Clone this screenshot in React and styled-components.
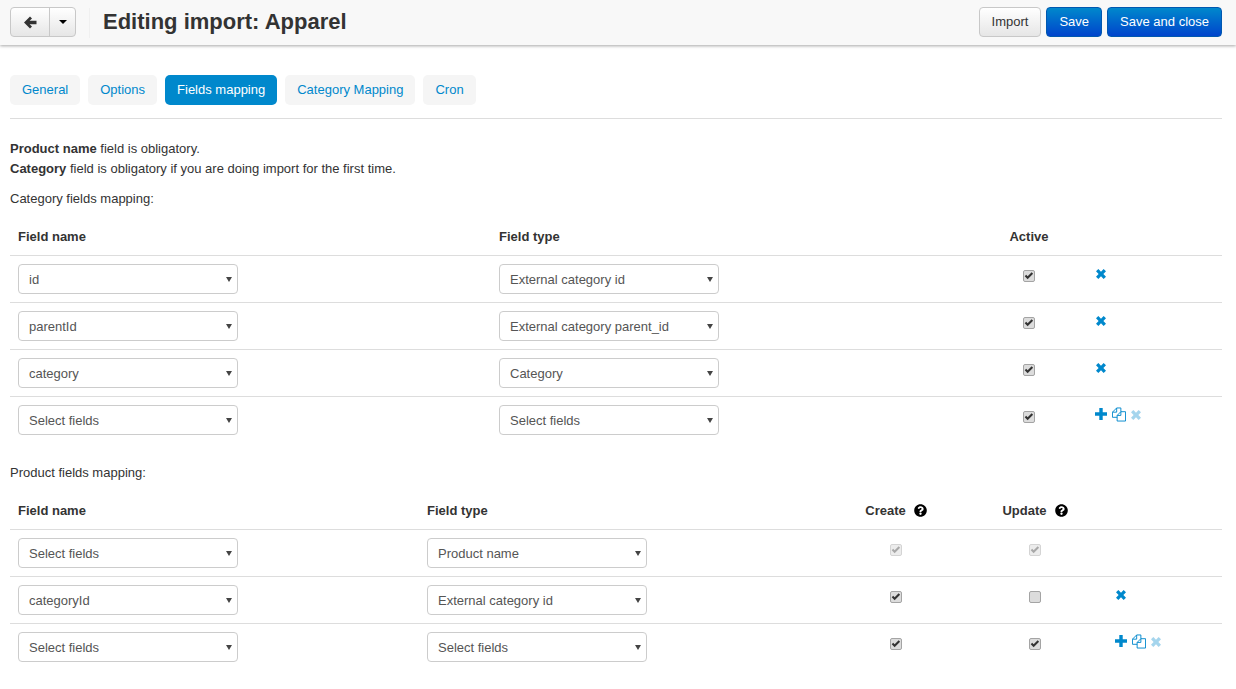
import React from 'react';
import styled, { createGlobalStyle } from 'styled-components';
import { FaQuestionCircle } from 'react-icons/fa';

const GlobalStyle = createGlobalStyle`
  html, body {
    margin: 0;
    padding: 0;
    background: #fff;
  }
  body {
    font-family: "Liberation Sans", Arial, sans-serif;
    font-size: 13px;
    line-height: 20px;
    color: #333;
  }
`;

const Header = styled.header`
  display: flex;
  align-items: center;
  height: 45px;
  padding: 0 14px 0 10px;
  background: #f8f8f8;
  box-shadow: 0 1px 3px rgba(0, 0, 0, 0.35);
`;
const BackGroup = styled.div`
  display: flex;
  height: 30px;
  margin-top: -1px;
  border: 1px solid #c8c8c8;
  border-radius: 4px;
  box-sizing: border-box;
  background: linear-gradient(#fff, #e6e6e6);
`;
const BackButton = styled.div`
  display: flex;
  align-items: center;
  justify-content: center;
  width: ${(props) => props.width}px;
  color: #333;
  & + & {
    border-left: 1px solid #c8c8c8;
  }
`;
const Caret = styled.span`
  width: 0;
  height: 0;
  border-left: 4px solid transparent;
  border-right: 4px solid transparent;
  border-top: 4px solid #000;
`;
const Divider = styled.div`
  width: 1px;
  height: 30px;
  margin: 0 13px 0 13px;
  background: #f0f0f0;
`;
const Title = styled.h1`
  flex: 1;
  margin: -2px 0 0;
  font-size: 22px;
  line-height: 30px;
  font-weight: bold;
  color: #333;
`;
const Actions = styled.div`
  display: flex;
  gap: 5px;
  margin-top: -2px;
`;
const Button = styled.button`
  height: 30px;
  padding: 0 12px;
  border: 1px solid ${(props) => (props.$primary ? '#0058b0' : '#c8c8c8')};
  border-radius: 4px;
  font: 13px "Liberation Sans", Arial, sans-serif;
  color: ${(props) => (props.$primary ? '#fff' : '#333')};
  background: ${(props) =>
    props.$primary ? 'linear-gradient(#0088cc, #0044cc)' : 'linear-gradient(#fff, #e6e6e6)'};
`;

const Content = styled.main`
  padding: 30px 14px 0 10px;
`;
const Tabs = styled.nav`
  display: flex;
  gap: 8px;
  padding-bottom: 13px;
  margin-bottom: 20px;
  border-bottom: 1px solid #ddd;
`;
const Tab = styled.a`
  height: 30px;
  padding: 0 12px;
  border-radius: 5px;
  line-height: 30px;
  color: ${(props) => (props.$active ? '#fff' : '#0088cc')};
  background: ${(props) => (props.$active ? '#0088cc' : '#f5f5f5')};
`;
const Line = styled.div`
  margin-bottom: ${(props) => props.$gap || 0}px;
`;

const Table = styled.table`
  width: 1212px;
  table-layout: fixed;
  border-collapse: collapse;
  margin-bottom: ${(props) => props.$gap || 0}px;
`;
const Th = styled.th`
  padding: 8px;
  border-bottom: 1px solid #ddd;
  font-weight: bold;
  text-align: ${(props) => (props.$center ? 'center' : 'left')};
`;
const Td = styled.td`
  padding: 8px;
  border-top: 1px solid #ddd;
  vertical-align: top;
  text-align: ${(props) => (props.$center ? 'center' : 'left')};
`;
const SelectWrap = styled.div`
  position: relative;
  width: 220px;
  &::after {
    content: '';
    position: absolute;
    top: 13px;
    right: 6px;
    border-left: 3px solid transparent;
    border-right: 3px solid transparent;
    border-top: 5px solid #444;
    pointer-events: none;
  }
`;
const Select = styled.select`
  display: block;
  width: 100%;
  height: 30px;
  padding: 4px 6px 4px 10px;
  border: 1px solid #ccc;
  border-radius: 4px;
  background: #fff;
  appearance: none;
  font: 13px "Liberation Sans", Arial, sans-serif;
  color: #555;
`;
const Box = styled.span`
  display: inline-flex;
  align-items: center;
  justify-content: center;
  box-sizing: border-box;
  width: 12px;
  height: 12px;
  margin-top: 6px;
  border: 1px solid ${(props) => (props.$disabled ? '#d4d4d4' : '#a4a4a4')};
  border-radius: 2px;
  background: ${(props) => (props.$disabled ? '#ececec' : '#dcdcdc')};
  vertical-align: top;
`;
const Icons = styled.div`
  display: flex;
  align-items: center;
  gap: 5px;
  height: 12px;
  margin-top: 3px;
  padding-left: ${(props) => (props.$single ? 1 : 0)}px;
  color: #0088cc;
`;
const Faded = styled.span`
  display: flex;
  opacity: 0.35;
`;
const Help = styled.span`
  display: inline-block;
  height: 13px;
  margin-left: 8px;
  vertical-align: -2px;
  color: #000;
  svg {
    display: block;
  }
`;
const RemoveSvg = styled.svg`
  margin-top: 1px;
`;

const CheckMark = ({ disabled }) => (
  <svg width="10" height="10" viewBox="0 0 11 11">
    <path
      d="M0.8 5.8 L2.4 4.2 L4 5.8 L8.4 1.4 L10 3 L4 9.2 Z"
      fill={disabled ? '#a8a8a8' : '#333'}
    />
  </svg>
);

const Check = ({ checked = true, disabled }) => (
  <Box $disabled={disabled}>{checked && <CheckMark disabled={disabled} />}</Box>
);

const ArrowIcon = () => (
  <svg width="13" height="13" viewBox="0 0 13 13" fill="currentColor">
    <path d="M0 6.5 L6 0.5 L8 2.5 L5.6 4.8 H12.5 V8.2 H5.6 L8 10.5 L6 12.5 Z" />
  </svg>
);

const RemoveIcon = () => (
  <RemoveSvg width="10" height="10" viewBox="0 0 11 11" fill="currentColor">
    <path d="M0 2.6 L2.6 0 L5.5 2.9 L8.4 0 L11 2.6 L8.1 5.5 L11 8.4 L8.4 11 L5.5 8.1 L2.6 11 L0 8.4 L2.9 5.5 Z" />
  </RemoveSvg>
);

const PlusIcon = () => (
  <svg width="12" height="12" viewBox="0 0 12 12" fill="currentColor">
    <path d="M4.3 0 H7.7 V4.3 H12 V7.7 H7.7 V12 H4.3 V7.7 H0 V4.3 H4.3 Z" />
  </svg>
);

const FilesIcon = () => (
  <svg width="14" height="15" viewBox="0 0 15 15" fill="none" stroke="currentColor" strokeWidth="1">
    <path d="M5.5 10.5 H0.5 V5 L5 0.5 H9.5 V4.5" />
    <path d="M5 0.5 V5 H0.5" />
    <path d="M5.5 14.5 V8.5 L9.5 4.5 H14.5 V14.5 Z" />
    <path d="M9.5 4.5 V8.5 H5.5" />
  </svg>
);

const RowIcons = ({ last }) =>
  last ? (
    <Icons>
      <PlusIcon />
      <FilesIcon />
      <Faded>
        <RemoveIcon />
      </Faded>
    </Icons>
  ) : (
    <Icons $single>
      <RemoveIcon />
    </Icons>
  );

const FieldSelect = ({ value }) => (
  <SelectWrap>
    <Select defaultValue={value}>
      <option>{value}</option>
    </Select>
  </SelectWrap>
);

const categoryRows = [
  ['id', 'External category id'],
  ['parentId', 'External category parent_id'],
  ['category', 'Category'],
  ['Select fields', 'Select fields'],
];

const productRows = [
  { name: 'Select fields', type: 'Product name', create: true, update: true, locked: true },
  { name: 'categoryId', type: 'External category id', create: true, update: false },
  { name: 'Select fields', type: 'Select fields', create: true, update: true, last: true },
];

const tabs = ['General', 'Options', 'Fields mapping', 'Category Mapping', 'Cron'];

const App = () => (
  <>
    <GlobalStyle />
    <Header>
      <BackGroup>
        <BackButton width={38}>
          <ArrowIcon />
        </BackButton>
        <BackButton width={25}>
          <Caret />
        </BackButton>
      </BackGroup>
      <Divider />
      <Title>Editing import: Apparel</Title>
      <Actions>
        <Button>Import</Button>
        <Button $primary>Save</Button>
        <Button $primary>Save and close</Button>
      </Actions>
    </Header>
    <Content>
      <Tabs>
        {tabs.map((tab) => (
          <Tab key={tab} $active={tab === 'Fields mapping'}>
            {tab}
          </Tab>
        ))}
      </Tabs>
      <Line>
        <b>Product name</b> field is obligatory.
      </Line>
      <Line $gap={10}>
        <b>Category</b> field is obligatory if you are doing import for the first time.
      </Line>
      <Line $gap={10}>Category fields mapping:</Line>
      <Table $gap={20}>
        <colgroup>
          <col width="481" />
          <col width="480" />
          <col width="116" />
          <col width="135" />
        </colgroup>
        <thead>
          <tr>
            <Th>Field name</Th>
            <Th>Field type</Th>
            <Th $center>Active</Th>
            <Th />
          </tr>
        </thead>
        <tbody>
          {categoryRows.map(([name, type], i) => (
            <tr key={i}>
              <Td>
                <FieldSelect value={name} />
              </Td>
              <Td>
                <FieldSelect value={type} />
              </Td>
              <Td $center>
                <Check />
              </Td>
              <Td>
                <RowIcons last={i === categoryRows.length - 1} />
              </Td>
            </tr>
          ))}
        </tbody>
      </Table>
      <Line $gap={10}>Product fields mapping:</Line>
      <Table>
        <colgroup>
          <col width="409" />
          <col width="410" />
          <col width="134" />
          <col width="144" />
          <col width="115" />
        </colgroup>
        <thead>
          <tr>
            <Th>Field name</Th>
            <Th>Field type</Th>
            <Th $center>
              Create
              <Help>
                <FaQuestionCircle size={13} />
              </Help>
            </Th>
            <Th $center>
              Update
              <Help>
                <FaQuestionCircle size={13} />
              </Help>
            </Th>
            <Th />
          </tr>
        </thead>
        <tbody>
          {productRows.map((row, i) => (
            <tr key={i}>
              <Td>
                <FieldSelect value={row.name} />
              </Td>
              <Td>
                <FieldSelect value={row.type} />
              </Td>
              <Td $center>
                <Check checked={row.create} disabled={row.locked} />
              </Td>
              <Td $center>
                <Check checked={row.update} disabled={row.locked} />
              </Td>
              <Td>{!row.locked && <RowIcons last={row.last} />}</Td>
            </tr>
          ))}
        </tbody>
      </Table>
    </Content>
  </>
);

export default App;
